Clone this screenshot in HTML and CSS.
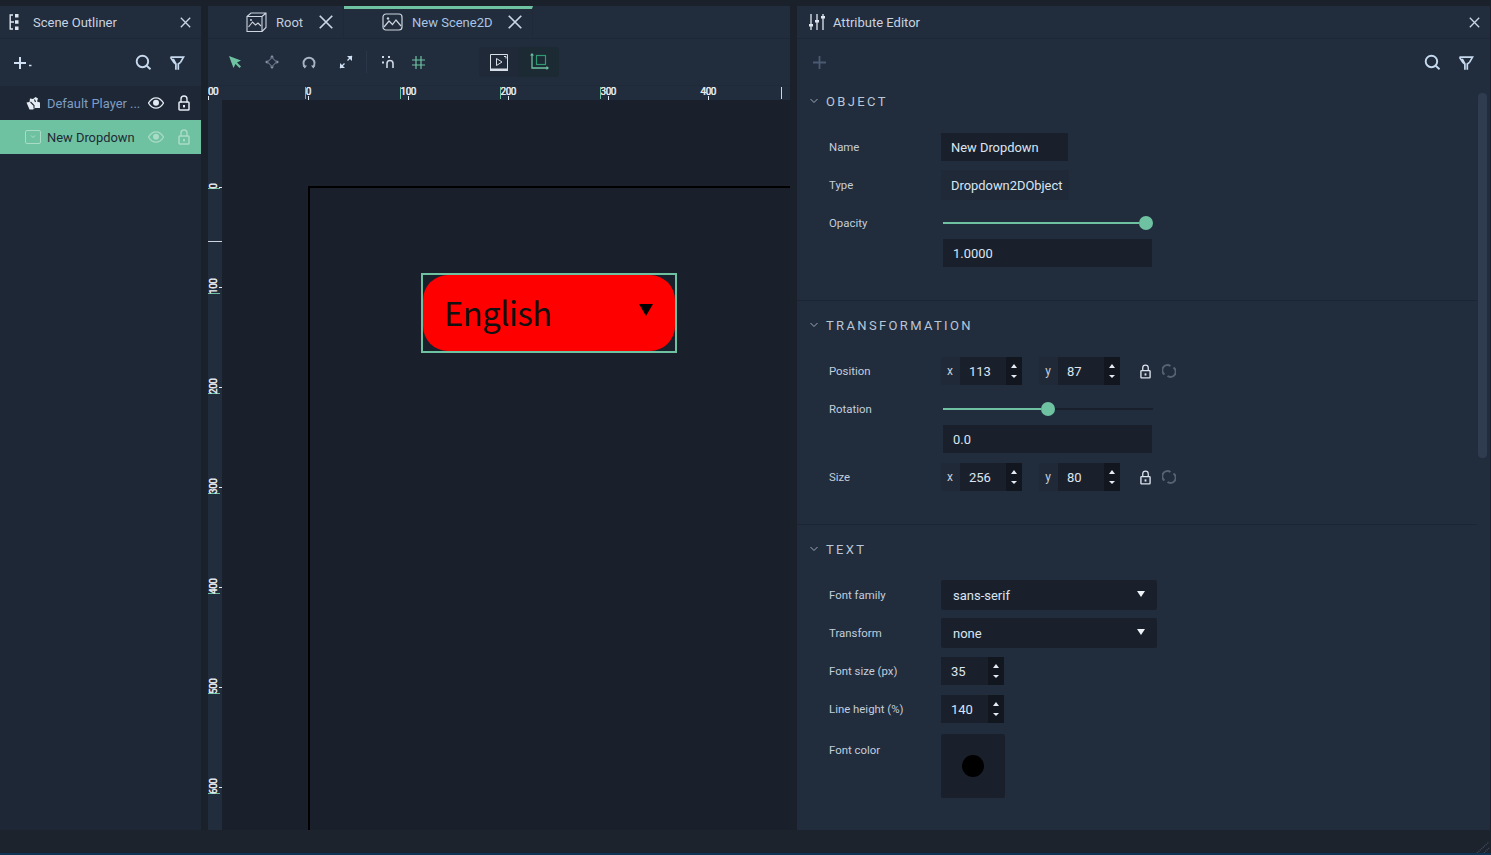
FILE: index.html
```html
<!DOCTYPE html>
<html lang="en">
<head>
  <meta charset="UTF-8" />
  <title>Scene Editor</title>
  <link rel="stylesheet" href="styles.css">
</head>
<body>
  <svg class="defs" width="0" height="0">
    <defs>
      <symbol id="i-close" viewBox="0 0 16 16"><path d="M3 3l10 10M13 3L3 13" fill="none" stroke="currentColor" stroke-width="1.4"/></symbol>
      <symbol id="i-search" viewBox="0 0 16 16"><circle cx="7" cy="7" r="5.4" fill="none" stroke="currentColor" stroke-width="1.8"/><path d="M11 11l3.6 3.4" stroke="currentColor" stroke-width="1.8"/></symbol>
      <symbol id="i-filter" viewBox="0 0 16 16"><path d="M1.5 2.2h13l-3 5.2M1.5 2.2l3.4 5.2 2 1.6v5.8M11.5 7.400l-2.200 1.600v5.800M4.200 3.800l2.700 5.200" fill="none" stroke="currentColor" stroke-width="1.700"/></symbol>
      <symbol id="i-eye" viewBox="0 0 16 12"><path d="M0.500 6C3 2 5.500 0.800 8 0.800S13 2 15.500 6C13 10 10.500 11.200 8 11.200S3 10 0.500 6z" fill="none" stroke="currentColor" stroke-width="1.300"/><circle cx="8" cy="5.800" r="3" fill="currentColor"/></symbol>
      <symbol id="i-lock" viewBox="0 0 12 16"><path d="M3 7.500V4a3 3 0 0 1 6 0V7.500" fill="none" stroke="currentColor" stroke-width="1.400"/><rect x="1" y="7" width="10" height="8" rx="0.800" fill="none" stroke="currentColor" stroke-width="1.500"/><rect x="5" y="10" width="2" height="2.400" fill="currentColor"/></symbol>
      <symbol id="i-link" viewBox="0 0 14 14"><path d="M2.500 10.500A5.200 5.200 0 0 1 8.500 2M11.500 3.500A5.200 5.200 0 0 1 5.500 12" fill="none" stroke="currentColor" stroke-width="2"/></symbol>
      <symbol id="i-chev" viewBox="0 0 8 6"><path d="M0.500 1L4 4.500 7.500 1" fill="none" stroke="currentColor" stroke-width="1"/></symbol>
    </defs>
  </svg>

  <div class="app">
    <div class="workspace">

      <aside class="outliner">
        <div class="panel-head">
          <svg class="head-icon" width="10" height="16" viewBox="0 0 10 16">
            <path d="M4 1H1.200v14H4M1 8h4" fill="none" stroke="#dfe6f0" stroke-width="1.400"/>
            <path d="M6 0h3.500v3.500H6zM6 6.200h3.500v3.500H6zM6 12.500h3.500V16H6z" fill="#dfe6f0"/>
          </svg>
          <span class="panel-title">Scene Outliner</span>
          <svg class="close"><use href="#i-close"/></svg>
        </div>
        <div class="outliner-tools">
          <svg class="add-icon" width="20" height="14" viewBox="0 0 20 14">
            <path d="M7 1v12M1 7h12" stroke="#cfe0f5" stroke-width="2"/>
            <path d="M16 9.500h2.500" stroke="#cfe0f5" stroke-width="1.500"/>
          </svg>
          <svg class="tool-search"><use href="#i-search"/></svg>
          <svg class="tool-filter"><use href="#i-filter"/></svg>
        </div>
        <ul class="tree">
          <li class="tree-row">
            <svg class="tree-icon" width="15" height="14" viewBox="0 0 15 14">
              <path d="M1 6.500l3-.5.500-3.500 3 .5L10 1l2.500 1.500-1 3 3 1V12H9.500L7.500 13.500H4L2.500 10z" fill="#e6ecf4"/>
              <path d="M5 6l3.500 3.500v3M9 3.500l1 2.500" fill="none" stroke="#1c2634" stroke-width="1.100"/>
            </svg>
            <span class="tree-name">Default Player ...</span>
            <svg class="tree-eye"><use href="#i-eye"/></svg>
            <svg class="tree-lock"><use href="#i-lock"/></svg>
          </li>
          <li class="tree-row selected">
            <svg class="tree-icon" width="16" height="14" viewBox="0 0 16 14">
              <rect x="0.500" y="0.500" width="15" height="13" rx="1.500" fill="none" stroke="#a9dcc6"/>
              <path d="M6 5.500l2 2 2-2" fill="none" stroke="#a9dcc6"/>
            </svg>
            <span class="tree-name">New Dropdown</span>
            <svg class="tree-eye"><use href="#i-eye"/></svg>
            <svg class="tree-lock"><use href="#i-lock"/></svg>
          </li>
        </ul>
      </aside>

      <main class="viewport">
        <div class="tabs">
          <div class="tab tab-root">
            <svg class="tab-icon" width="21" height="20" viewBox="0 0 21 20">
              <path d="M1 4.500h15v15H1zM1 4.500L5 1h15v14.500l-4 4M16 4.500L20 1" fill="none" stroke="#cdd5e0" stroke-width="1.100"/>
              <path d="M2.500 15l4-5 3 3 2.500-2 3 3" fill="none" stroke="#cdd5e0" stroke-width="1.100"/>
              <circle cx="5" cy="8" r="1" fill="#cdd5e0"/>
            </svg>
            <span>Root</span>
            <svg class="tab-close"><use href="#i-close"/></svg>
          </div>
          <div class="tab tab-active">
            <svg class="tab-icon" width="21" height="18" viewBox="0 0 21 18">
              <rect x="1" y="1" width="19" height="16" rx="3" fill="none" stroke="#cdd5e0" stroke-width="1.200"/>
              <path d="M2 14l5-6 3.500 3.500L14 7l5 6" fill="none" stroke="#cdd5e0" stroke-width="1.200"/>
              <circle cx="6" cy="5.500" r="1.200" fill="#cdd5e0"/>
            </svg>
            <span>New Scene2D</span>
            <svg class="tab-close"><use href="#i-close"/></svg>
          </div>
        </div>

        <div class="view-tools">
          <svg class="vt-arrow" width="14" height="14" viewBox="0 0 14 14"><path d="M1 1l12 4.500-4 2 4 4-1.500 1.500-4-4-2 4z" fill="#6fc2a1"/></svg>
          <svg class="vt-move" width="14" height="14" viewBox="0 0 14 14">
            <path d="M7 0l2 2.500H5zM7 14l-2-2.500h4zM0 7l2.500-2v4zM14 7l-2.500 2V5z" fill="#8794a8"/>
            <path d="M7 2.500L11.500 7 7 11.500 2.500 7z" fill="none" stroke="#8794a8"/>
          </svg>
          <svg class="vt-rotate" width="14" height="14" viewBox="0 0 14 14">
            <path d="M3 12A5.500 5.500 0 1 1 11 12" fill="none" stroke="#a9b4c4" stroke-width="1.900"/>
            <path d="M0.500 10.500h4.500l-2.200 3zM9 10.500h4.500l-2.200 3z" fill="#a9b4c4"/>
          </svg>
          <svg class="vt-scale" width="14" height="14" viewBox="0 0 14 14">
            <path d="M1 13l4.500-4.500M13 1L8.500 5.500" stroke="#cfe0f5" stroke-width="1.300"/>
            <path d="M1 8v5h5zM13 6V1H8z" fill="#cfe0f5"/>
          </svg>
          <span class="vt-sep"></span>
          <svg class="vt-magnet" width="14" height="14" viewBox="0 0 14 14">
            <path d="M6 13V8.500a3 3 0 0 1 6 0V13" fill="none" stroke="#cfd8e4" stroke-width="1.600"/>
            <path d="M1 1h2v2H1zM7 1h2v2H7zM1 6.500h2v2H1z" fill="#cfd8e4"/>
          </svg>
          <svg class="vt-grid" width="13" height="13" viewBox="0 0 13 13">
            <path d="M4 0v13M9 0v13M0 4h13M0 9h13" stroke="#6fc2a1" stroke-width="1.200"/>
          </svg>
          <div class="vt-group">
            <div class="vt-play">
              <svg width="18" height="17" viewBox="0 0 18 17">
                <path d="M0.500 0.500h17v15h-17z" fill="none" stroke="#d8dee8"/>
                <path d="M0 14.500h18V17H0z" fill="#d8dee8"/>
                <path d="M6.500 4.500l5.500 3.500-5.500 3.500z" fill="none" stroke="#d8dee8"/>
                <path d="M14 2.500h2v2" fill="none" stroke="#d8dee8"/>
              </svg>
            </div>
            <div class="vt-crop">
              <svg width="19" height="18" viewBox="0 0 19 18">
                <rect x="6.500" y="2.500" width="9" height="9" fill="none" stroke="#2f9a74" stroke-width="1.200"/>
                <path d="M2 1v14h16" fill="none" stroke="#6fc2a1" stroke-width="1.300"/>
                <path d="M2 0l-2 2.500h4zM19 15l-2.500-2v4z" fill="#6fc2a1"/>
              </svg>
            </div>
          </div>
        </div>

        <div class="ruler-top">
          <span class="rt-cell rt-nomark">00</span>
          <span class="rt-cell rt-zero">0</span>
          <span class="rt-cell">100</span>
          <span class="rt-cell">200</span>
          <span class="rt-cell">300</span>
          <span class="rt-cell rt-nomark rt-end">400</span>
        </div>

        <div class="stage">
          <div class="ruler-left">
            <span class="rl-cell"><b>0</b></span>
            <span class="rl-cell rl-extra"><b>100</b></span>
            <span class="rl-cell"><b>200</b></span>
            <span class="rl-cell"><b>300</b></span>
            <span class="rl-cell"><b>400</b></span>
            <span class="rl-cell"><b>500</b></span>
            <span class="rl-cell"><b>600</b></span>
          </div>
          <div class="canvas">
            <div class="scene-frame"></div>
            <div class="dropdown-node">
              <div class="dropdown-face">
                <span class="dropdown-text">English</span>
                <span class="dropdown-arrow"></span>
              </div>
            </div>
          </div>
        </div>
      </main>

      <aside class="attrs">
        <div class="panel-head">
          <svg class="head-icon attr-head-icon" width="16" height="16" viewBox="0 0 16 16">
            <path d="M2 0v16M8 0v16M14 0v16" stroke="#dfe6f0" stroke-width="1.300"/>
            <path d="M0 10h4v2.500H0zM6 6h4v2.500H6zM12 2h4v2.500h-4z" fill="#dfe6f0"/>
          </svg>
          <span class="panel-title">Attribute Editor</span>
          <svg class="close"><use href="#i-close"/></svg>
        </div>
        <div class="attr-tools">
          <svg class="attr-add" width="13" height="13" viewBox="0 0 13 13"><path d="M6.500 0v13M0 6.500h13" stroke="#4b5a72" stroke-width="1.800"/></svg>
          <svg class="tool-search"><use href="#i-search"/></svg>
          <svg class="tool-filter"><use href="#i-filter"/></svg>
        </div>

        <div class="attr-body">
          <section class="group group-object">
            <h3 class="group-head"><svg class="chev"><use href="#i-chev"/></svg>OBJECT</h3>
            <div class="row">
              <label>Name</label>
              <div class="box box-name">New Dropdown</div>
            </div>
            <div class="row">
              <label>Type</label>
              <div class="box box-type">Dropdown2DObject</div>
            </div>
            <div class="row">
              <label>Opacity</label>
              <div class="slider"><div class="slider-fill fill-full"></div><div class="slider-knob"></div><div class="slider-rest"></div></div>
            </div>
            <div class="row row-sub">
              <label></label>
              <div class="box box-wide">1.0000</div>
            </div>
          </section>

          <section class="group group-transform">
            <h3 class="group-head"><svg class="chev"><use href="#i-chev"/></svg>TRANSFORMATION</h3>
            <div class="row">
              <label>Position</label>
              <div class="num"><span class="axis">x</span><span class="num-val">113</span><span class="spin"></span></div>
              <div class="num num-y"><span class="axis">y</span><span class="num-val">87</span><span class="spin"></span></div>
              <svg class="row-lock"><use href="#i-lock"/></svg>
              <svg class="row-link"><use href="#i-link"/></svg>
            </div>
            <div class="row">
              <label>Rotation</label>
              <div class="slider"><div class="slider-fill fill-half"></div><div class="slider-knob"></div><div class="slider-rest"></div></div>
            </div>
            <div class="row row-sub">
              <label></label>
              <div class="box box-wide">0.0</div>
            </div>
            <div class="row">
              <label>Size</label>
              <div class="num"><span class="axis">x</span><span class="num-val">256</span><span class="spin"></span></div>
              <div class="num num-y"><span class="axis">y</span><span class="num-val">80</span><span class="spin"></span></div>
              <svg class="row-lock"><use href="#i-lock"/></svg>
              <svg class="row-link"><use href="#i-link"/></svg>
            </div>
          </section>

          <section class="group group-text">
            <h3 class="group-head"><svg class="chev"><use href="#i-chev"/></svg>TEXT</h3>
            <div class="row row-select">
              <label>Font family</label>
              <div class="select">sans-serif<span class="select-arrow"></span></div>
            </div>
            <div class="row row-select">
              <label>Transform</label>
              <div class="select">none<span class="select-arrow"></span></div>
            </div>
            <div class="row">
              <label>Font size (px)</label>
              <div class="num num-plain"><span class="num-val">35</span><span class="spin"></span></div>
            </div>
            <div class="row">
              <label>Line height (%)</label>
              <div class="num num-plain"><span class="num-val">140</span><span class="spin"></span></div>
            </div>
            <div class="row row-color">
              <label>Font color</label>
              <div class="swatch"><span class="swatch-dot"></span></div>
            </div>
          </section>

          <div class="scrollbar"></div>
        </div>
      </aside>
    </div>

    <footer class="statusbar">
      <svg class="grip" width="14" height="12" viewBox="0 0 14 12">
        <path d="M1 12L13 1M8 12l5-5" stroke="#3d4a5e" stroke-width="1.500" stroke-dasharray="1 1"/>
      </svg>
    </footer>
  </div>
</body>
</html>
```

FILE: styles.css
```css
* {
  box-sizing: border-box;
}
html, body {
  height: 100%;
}
body {
  margin: 0;
  background-color: #1b212b;
  color: #dfe6f0;
  font-family: Roboto, "Liberation Sans", sans-serif;
  font-size: 13px;
  overflow: hidden;
}
.defs {
  position: absolute;
}
.app {
  display: flex;
  flex-direction: column;
  height: 100vh;
  border-bottom: 2px solid #0f3556;
}
.workspace {
  display: flex;
  flex: 1;
  min-height: 0;
  gap: 7px;
  padding-top: 6px;
}
.statusbar {
  display: flex;
  justify-content: flex-end;
  align-items: flex-end;
  height: 23px;
  padding: 0 1px 0 0;
  background-color: #1c232d;
}

/* shared panel header */
.panel-head {
  display: flex;
  align-items: center;
  height: 33px;
  background-color: #212c3c;
  border-bottom: 1px solid #1d2735;
}
.panel-title {
  flex: 1;
  color: #c9d3e0;
  font-size: 13px;
}
.head-icon {
  margin: 0 14px 0 9px;
}
.close {
  width: 15px;
  height: 15px;
  margin-right: 8px;
  color: #c9d6e6;
}
.tool-search {
  width: 17px;
  height: 17px;
  color: #c6d9ee;
}
.tool-filter {
  width: 16px;
  height: 16px;
  margin-left: 17px;
  color: #c6d9ee;
}

/* scene outliner */
.outliner {
  display: flex;
  flex-direction: column;
  width: 201px;
  background-color: #1d2735;
}
.outliner-tools {
  display: flex;
  align-items: center;
  height: 47px;
  padding: 0 16px 0 13px;
  background-color: #212c3c;
}
.add-icon {
  margin-right: auto;
}
.tree {
  list-style: none;
  margin: 0;
  padding: 0;
}
.tree-row {
  display: flex;
  align-items: center;
  height: 34px;
  padding-right: 11px;
  color: #7f9dc4;
  font-size: 12.9px;
}
.tree-icon {
  flex: none;
  width: 16px;
  margin: 0 6px 0 25px;
}
.tree-name {
  flex: 1;
  white-space: nowrap;
  overflow: hidden;
}
.tree-eye {
  flex: none;
  width: 16px;
  height: 12px;
  margin-right: 14px;
  color: #e3eaf2;
}
.tree-lock {
  flex: none;
  width: 12px;
  height: 16px;
  color: #e3eaf2;
}
.tree-row.selected {
  background-color: #6fc2a1;
  color: #1e2a36;
}
.tree-row.selected .tree-eye,
.tree-row.selected .tree-lock {
  color: #a9dcc6;
}

/* middle column */
.viewport {
  display: flex;
  flex-direction: column;
  width: 582px;
  min-width: 0;
  background-color: #212c3c;
}
.tabs {
  display: flex;
  height: 33px;
  border-bottom: 1px solid #1d2735;
}
.tab {
  display: flex;
  align-items: center;
  color: #c3cedc;
  font-size: 13px;
}
.tab-root {
  width: 136px;
  padding-left: 38px;
  border-right: 1px solid #1f2937;
}
.tab-active {
  width: 189px;
  padding: 0 0 3px 38px;
  border-top: 3px solid #6fc2a1;
  border-right: 1px solid #1f2937;
  color: #a9c4e4;
}
.tab-icon {
  flex: none;
  margin-right: 9px;
}
.tab-close {
  flex: none;
  width: 20px;
  height: 20px;
  margin-left: 13px;
  color: #c9d6e6;
}
.tab-active .tab-close {
  margin-left: 12px;
}
.view-tools {
  display: flex;
  align-items: center;
  height: 47px;
  padding-left: 20px;
  border-bottom: 1px solid #1f2937;
}
.view-tools svg {
  flex: none;
}
.vt-move {
  margin-left: 23px;
}
.vt-rotate {
  margin-left: 23px;
}
.vt-scale {
  margin-left: 23px;
}
.vt-sep {
  width: 1px;
  height: 22px;
  margin: 0 14px 0 13px;
  background-color: #2b3749;
}
.vt-grid {
  margin-left: 17px;
}
.vt-group {
  display: flex;
  height: 30px;
  margin-left: 54px;
  border-radius: 4px;
  overflow: hidden;
}
.vt-play, .vt-crop {
  display: flex;
  align-items: center;
  justify-content: center;
  width: 40px;
}
.vt-play {
  background-color: #1f2937;
}
.vt-crop {
  background-color: #1c2a33;
}

/* rulers */
.ruler-top {
  display: flex;
  flex: none;
  height: 14px;
  overflow: hidden;
}
.rt-cell {
  position: relative;
  flex: none;
  width: 100px;
  height: 14px;
  color: #e4e9f0;
  font-size: 10px;
  line-height: 12px;
  letter-spacing: -0.5px;
  text-align: center;
  text-shadow: 0.5px 0 0 #e4e9f0;
}
.rt-cell:first-child {
  margin-left: -50px;
  text-align: right;
  padding-right: 40px;
}
.rt-cell::after {
  content: "";
  position: absolute;
  left: 50%;
  bottom: 0;
  width: 1px;
  height: 4px;
  background-color: #e4e9f0;
}
.rt-cell::before {
  content: "";
  position: absolute;
  left: 42px;
  top: 1px;
  width: 1px;
  height: 12px;
  background-color: #6fc2a1;
}
.rt-nomark::before {
  display: none;
}
.rt-zero::before {
  left: 47px;
}
.rt-end {
  overflow: visible;
}
.rt-end::before {
  display: block;
  left: 123px;
  background-color: #cdd5e0;
}
.stage {
  display: flex;
  flex: 1;
  min-height: 0;
}
.ruler-left {
  position: relative;
  flex: none;
  width: 14px;
  padding-top: 36px;
  overflow: hidden;
}
.ruler-left::after {
  content: "";
  position: absolute;
  left: 0;
  top: 141px;
  width: 14px;
  height: 1px;
  background-color: #cdd5e0;
}
.rl-cell {
  position: relative;
  display: flex;
  align-items: center;
  justify-content: center;
  height: 100px;
  padding-right: 3px;
}
.rl-cell b {
  display: block;
  color: #e4e9f0;
  font-size: 10px;
  font-weight: 400;
  letter-spacing: -0.5px;
  white-space: nowrap;
  transform: rotate(-90deg);
  text-shadow: 0.5px 0 0 #e4e9f0;
}
.rl-cell::after {
  content: "";
  position: absolute;
  right: 0;
  top: 51px;
  width: 3px;
  height: 1px;
  background-color: #e4e9f0;
}
.rl-cell::before {
  content: "";
  position: absolute;
  left: 0;
  top: 57px;
  width: 12px;
  height: 1px;
  background-color: #6fc2a1;
}
.rl-cell:first-child::before {
  top: 52px;
}
.canvas {
  position: relative;
  flex: 1;
  background-color: #1a202b;
  overflow: hidden;
}
.scene-frame {
  position: absolute;
  left: 86px;
  top: 86px;
  width: 1000px;
  height: 1000px;
  border-left: 2px solid #000;
  border-top: 2px solid #000;
}
.dropdown-node {
  position: absolute;
  left: 199px;
  top: 173px;
  width: 256px;
  height: 80px;
  border: 2px solid #6fc2a1;
}
.dropdown-face {
  display: flex;
  align-items: center;
  justify-content: space-between;
  height: 100%;
  padding: 0 22px 0 21px;
  background-color: #f00;
  border-radius: 25px;
}
.dropdown-text {
  color: #111;
  font-family: "Noto Sans CJK JP", "Noto Sans", sans-serif;
  font-size: 32.7px;
  letter-spacing: -0.5px;
  line-height: 1;
  margin-bottom: 2px;
}
.dropdown-arrow {
  width: 0;
  height: 0;
  margin-bottom: 7px;
  border-left: 7px solid transparent;
  border-right: 7px solid transparent;
  border-top: 12px solid #000;
}

/* attribute editor */
.attrs {
  display: flex;
  flex-direction: column;
  flex: 1;
  min-width: 0;
  margin-right: 1px;
  background-color: #212c3c;
}
.attr-head-icon {
  margin: 0 8px 0 12px;
}
.attr-tools {
  display: flex;
  align-items: center;
  flex: none;
  height: 47px;
  padding: 0 16px 0 16px;
}
.attr-add {
  margin-right: auto;
}
.attr-body {
  position: relative;
  flex: 1;
  min-height: 0;
  padding-right: 13px;
}
.scrollbar {
  position: absolute;
  right: 3px;
  top: 7px;
  width: 9px;
  height: 365px;
  border-radius: 4px;
  background-color: #2f3b4f;
}
.group {
  border-bottom: 1px solid #1c2533;
  padding-left: 32px;
}
.group-object {
  height: 215px;
}
.group-transform {
  height: 215px;
}
.group-text {
  border-bottom: none;
}
.group-head {
  position: relative;
  display: flex;
  align-items: center;
  height: 30px;
  margin: 0 0 17px;
  color: #b9c6d8;
  font-size: 13px;
  font-weight: 400;
  letter-spacing: 2.35px;
  text-indent: -3px;
}
.group-transform .group-head {
  margin-top: 9px;
}
.group-text .group-head {
  margin-top: 9px;
  margin-bottom: 16px;
}
.chev {
  position: absolute;
  left: -19px;
  top: 12px;
  width: 8px;
  height: 6px;
  color: #9aa8bc;
}
.row {
  display: flex;
  align-items: center;
  height: 28px;
  margin-bottom: 10px;
}
.row-sub {
  margin-top: -8px;
}
.row label {
  flex: none;
  width: 112px;
  color: #c3cedc;
  font-size: 11.4px;
}
.box {
  display: flex;
  align-items: center;
  height: 28px;
  padding-left: 10px;
  background-color: #1a202b;
  color: #dbe5f2;
  font-size: 12.9px;
}
.box-name {
  width: 127px;
}
.box-type {
  width: 128px;
  height: 30px;
  background-color: #1f2937;
  white-space: nowrap;
}
.box-wide {
  width: 209px;
  margin-left: 2px;
}
.slider {
  position: relative;
  display: flex;
  align-items: center;
  width: 210px;
  height: 14px;
  margin-left: 2px;
}
.slider-fill {
  height: 2px;
  background-color: #6fc2a1;
}
.fill-full {
  width: 196px;
}
.fill-half {
  width: 98px;
}
.slider-knob {
  flex: none;
  width: 14px;
  height: 14px;
  border-radius: 50%;
  background-color: #6fc2a1;
}
.slider-rest {
  flex: 1;
  height: 2px;
  background-color: #1a202b;
}
.num {
  display: flex;
  height: 28px;
  width: 81px;
  background-color: #1f2937;
  font-size: 13px;
}
.num-y {
  margin-left: 17px;
}
.axis {
  display: flex;
  align-items: center;
  justify-content: center;
  flex: none;
  width: 19px;
  padding-right: 1px;
  color: #c3cedc;
  font-size: 12px;
}
.num-val {
  display: flex;
  align-items: center;
  flex: 1;
  padding-left: 9px;
  background-color: #1a202b;
  color: #dbe5f2;
}
.spin {
  position: relative;
  flex: none;
  width: 16px;
  background-color: #12161f;
}
.spin::before, .spin::after {
  content: "";
  position: absolute;
  left: 5px;
  border-left: 3px solid transparent;
  border-right: 3px solid transparent;
}
.spin::before {
  top: 7px;
  border-bottom: 4px solid #e6ecf4;
}
.spin::after {
  bottom: 7px;
  border-top: 3px solid #e6ecf4;
}
.num-plain {
  width: 63px;
}
.num-plain .num-val {
  padding-left: 10px;
}
.row-lock {
  flex: none;
  width: 11px;
  height: 15px;
  margin-left: 20px;
  color: #dbe2ec;
}
.row-link {
  flex: none;
  width: 14px;
  height: 14px;
  margin-left: 11px;
  color: #566273;
}
.row-select {
  height: 30px;
  margin-bottom: 8px;
}
.row-select + .row:not(.row-select) {
  margin-top: 9px;
}
.select {
  position: relative;
  display: flex;
  align-items: center;
  width: 216px;
  height: 30px;
  padding-left: 12px;
  border-radius: 2px;
  background-color: #1a202b;
  color: #dbe5f2;
}
.select-arrow {
  position: absolute;
  right: 12px;
  top: 11px;
  border-left: 4px solid transparent;
  border-right: 4px solid transparent;
  border-top: 6px solid #eef2f7;
}
.row-color {
  align-items: flex-start;
  height: 64px;
  margin-top: 11px;
}
.row-color label {
  margin-top: 9px;
}
.swatch {
  display: flex;
  align-items: center;
  justify-content: center;
  width: 64px;
  height: 64px;
  border-radius: 2px;
  background-color: #1a202b;
}
.swatch-dot {
  width: 22px;
  height: 22px;
  border-radius: 50%;
  background-color: #000;
}
```
